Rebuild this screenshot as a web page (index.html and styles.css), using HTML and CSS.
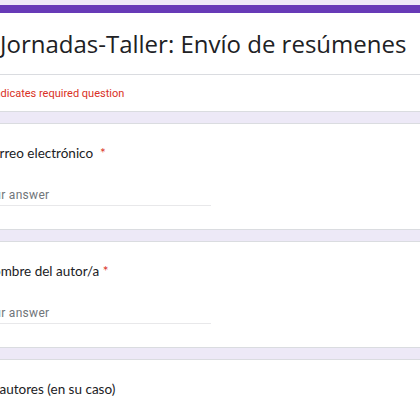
FILE: index.html
```html
<!doctype html>
<html lang="es">
  <head>
    <meta charset="UTF-8" />
    <meta name="viewport" content="width=device-width, initial-scale=1.0" />
    <title>Jornadas-Taller: Envío de resúmenes</title>
    <link rel="stylesheet" href="styles.css">
  </head>
  <body>
    <div class="form">
      <div class="card header-card">
        <div class="title">Jornadas-Taller: Envío de resúmenes</div>
        <div class="required-note">* Indicates required question</div>
      </div>

      <div class="card question">
        <div class="q-title">Correo electrónico &nbsp;<span class="star">*</span></div>
        <div class="answer">Your answer</div>
      </div>

      <div class="card question">
        <div class="q-title">Nombre del autor/a <span class="star">*</span></div>
        <div class="answer">Your answer</div>
      </div>

      <div class="card question">
        <div class="q-title">Coautores (en su caso)</div>
        <div class="answer">Your answer</div>
      </div>
    </div>
  </body>
</html>
```

FILE: styles.css
```css
:root {
  --bg: #ede9f7;
  --purple: #673ab7;
  --border: #dadce0;
  --text: #202124;
  --muted: #70757a;
  --red: #d93025;
}

html,
body {
  margin: 0;
  height: 100%;
  overflow: hidden;
}

body {
  background: var(--bg);
  padding-top: 5px;
  font-family: "Open Sans", sans-serif;
  color: var(--text);
}

.form {
  display: flex;
  flex-direction: column;
  gap: 11px;
  margin-left: -41px;
  margin-right: -40px;
}

.card {
  background: #fff;
  border: 1px solid var(--border);
  border-radius: 8px;
  padding-left: 24px;
}

.header-card {
  border-top: 8px solid var(--purple);
  padding-left: 0;
}

.title {
  height: 61px;
  display: flex;
  align-items: center;
  padding-left: 40px;
  font-size: 24px;
  border-bottom: 1px solid var(--border);
}

.required-note {
  height: 36px;
  display: flex;
  align-items: center;
  padding-left: 24px;
  font-family: Roboto, sans-serif;
  font-size: 11px;
  color: var(--red);
}

.question {
  height: 105px;
}

.q-title {
  margin-left: -1px;
  padding-top: 19px;
  font-family: Lato, sans-serif;
  font-size: 13.5px;
  line-height: 20px;
}

.star {
  color: var(--red);
}

.answer {
  width: 231px;
  margin-top: 25px;
  margin-left: -4px;
  padding-bottom: 3px;
  border-bottom: 1px solid #e8e8ea;
  font-family: Roboto, sans-serif;
  font-size: 12px;
  letter-spacing: 0.3px;
  color: var(--muted);
}
```
